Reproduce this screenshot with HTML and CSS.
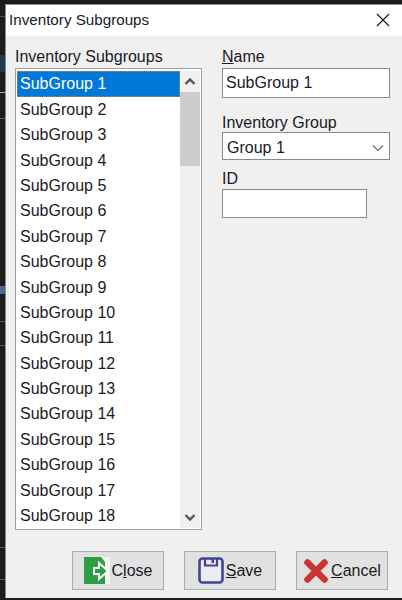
FILE: index.html
```html
<!DOCTYPE html>
<html lang="en">
<head>
    <meta charset="UTF-8">
    <title>Inventory Subgroups</title>
    <link rel="stylesheet" href="styles.css">
</head>
<body>
<div class="desktop_strip"></div>
<div class="window">
    <div class="titlebar">
        <span class="title_text">Inventory Subgroups</span>
        <svg class="close_x" width="14" height="14" viewBox="0 0 14 14"><path d="M1 1L13 13M13 1L1 13" stroke="#1a1a1a" stroke-width="1.2" fill="none"/></svg>
    </div>
    <div class="content">
        <div class="main_row">
            <div class="left_col">
                <div class="field_label list_label">Inventory Subgroups</div>
                <div class="listbox">
                    <ul class="list_items">
                        <li class="selected">SubGroup 1</li>
                        <li>SubGroup 2</li>
                        <li>SubGroup 3</li>
                        <li>SubGroup 4</li>
                        <li>SubGroup 5</li>
                        <li>SubGroup 6</li>
                        <li>SubGroup 7</li>
                        <li>SubGroup 8</li>
                        <li>SubGroup 9</li>
                        <li>SubGroup 10</li>
                        <li>SubGroup 11</li>
                        <li>SubGroup 12</li>
                        <li>SubGroup 13</li>
                        <li>SubGroup 14</li>
                        <li>SubGroup 15</li>
                        <li>SubGroup 16</li>
                        <li>SubGroup 17</li>
                        <li>SubGroup 18</li>
                    </ul>
                    <div class="scrollbar">
                        <svg class="scroll_arrow" width="20" height="21" viewBox="0 0 20 21"><path d="M5.500 13L10 8.500L14.500 13" stroke="#555" stroke-width="2.400" fill="none"/></svg>
                        <div class="scroll_track"><div class="scroll_thumb"></div></div>
                        <svg class="scroll_arrow" width="20" height="21" viewBox="0 0 20 21"><path d="M5.500 8L10 12.500L14.500 8" stroke="#555" stroke-width="2.400" fill="none"/></svg>
                    </div>
                </div>
            </div>
            <div class="right_col">
                <label class="field_label name_label"><u>N</u>ame</label>
                <div class="text_box">SubGroup 1</div>
                <label class="field_label group_label">Inventory Group</label>
                <div class="select_box">
                    <span>Group 1</span>
                    <svg width="12" height="8" viewBox="0 0 12 8"><path d="M1 1.500L6 6.500L11 1.500" stroke="#666" stroke-width="1.100" fill="none"/></svg>
                </div>
                <label class="field_label id_label">ID</label>
                <div class="text_box id_box"></div>
            </div>
        </div>
        <div class="button_row">
            <div class="btn">
                <svg width="26" height="27" viewBox="0 0 26 27">
                    <rect width="26" height="27" fill="#f3f6f3"/>
                    <path d="M0 0H17L21 5V27H0Z" fill="#2e9e45"/>
                    <path d="M10 11H15V6L24 14L15 22V17H10Z" fill="#2e9e45" stroke="#fff" stroke-width="2"/>
                </svg>
                <span>C<u>l</u>ose</span>
            </div>
            <div class="btn">
                <svg width="26" height="27" viewBox="0 0 26 27">
                    <rect x="1.500" y="1.500" width="23" height="24" rx="3" fill="#eceaf2" stroke="#3f4599" stroke-width="2.600"/>
                    <path d="M7 2V8.500H19V2" fill="none" stroke="#3f4599" stroke-width="2.200"/>
                    <rect x="13.500" y="2" width="2.500" height="4" fill="#3f4599"/>
                </svg>
                <span><u>S</u>ave</span>
            </div>
            <div class="btn">
                <svg width="26" height="26" viewBox="0 0 26 26"><path d="M4.500 4.500L21.500 21.500M21.500 4.500L4.500 21.500" stroke="#cc3333" stroke-width="6.500" stroke-linecap="round" fill="none"/></svg>
                <span><u>C</u>ancel</span>
            </div>
        </div>
    </div>
</div>
</body>
</html>
```
FILE: styles.css
```css
html,body{
    margin: 0;
    height: 100%;
    overflow: hidden;
}
body{
    background: #1c1c1c;
    font-family: "Liberation Sans", Arial, sans-serif;
    font-size: 16px;
    color: #1a1a24;
    display: flex;
}
/* the bit of the desktop showing left of the dialog, with its row lines */
.desktop_strip{
    width: 5px;
    flex: none;
    background: linear-gradient(to bottom,
        #1c1c1c 16px, #555 16px, #555 17px,
        #1c1c1c 17px, #1c1c1c 55px, #24384c 55px, #24384c 72px,
        #1c1c1c 72px, #1c1c1c 92px, #aaa 92px, #aaa 93px,
        #1c1c1c 93px, #1c1c1c 118px, #666 118px, #666 119px,
        #1c1c1c 119px, #1c1c1c 286px, #4a6a96 286px, #4a6a96 294px,
        #1c1c1c 294px, #1c1c1c 321px, #555 321px, #555 322px,
        #1c1c1c 322px, #1c1c1c 345px, #555 345px, #555 346px,
        #1c1c1c 346px, #1c1c1c 547px, #555 547px, #555 548px,
        #1c1c1c 548px, #1c1c1c 579px, #555 579px, #555 580px,
        #1c1c1c 580px);
}
.window{
    margin-top: 4px;
    height: 594px;
    flex: 1;
    background: #f0f0f0;
    border-top: 1px solid #8a8a8a;
    border-left: 1px solid #8a8a8a;
    box-sizing: border-box;
    display: flex;
    flex-direction: column;
}
.titlebar{
    height: 31px;
    background: #fff;
    display: flex;
    align-items: center;
    justify-content: space-between;
    padding: 0 13px 2px 3px;
    box-sizing: border-box;
    flex: none;
}
.title_text{
    font-size: 15.2px;
}
.content{
    padding: 10px 13px 0 9px;
    flex: 1;
}
.main_row{
    display: flex;
    gap: 20px;
}
.left_col{
    width: 187px;
}
.field_label{
    display: block;
    line-height: 22px;
}
.list_label{
    height: 22px;
}
.listbox{
    height: 462px;
    box-sizing: border-box;
    border: 1px solid #a0a0a0;
    background: #fff;
    display: flex;
    padding: 2px 1px 1px 1px;
}
.list_items{
    list-style: none;
    margin: 0;
    padding: 0.4px 0 0;
    flex: 1;
    overflow: hidden;
}
.list_items li{
    height: 25.4px;
    line-height: 25.4px;
    padding-left: 3px;
}
.list_items li.selected{
    background: #0078d7;
    color: #fff;
    outline: 1px dotted #c58a3a;
    outline-offset: -1px;
}
.scrollbar{
    width: 20px;
    display: flex;
    flex-direction: column;
    background: #f0f0f0;
    flex: none;
}
.scroll_arrow{
    display: block;
    flex: none;
}
.scroll_track{
    flex: 1;
}
.scroll_thumb{
    height: 74px;
    background: #cdcdcd;
}
.right_col{
    width: 168px;
}
.text_box{
    box-sizing: border-box;
    height: 30px;
    border: 1px solid #8a8a8a;
    background: #fff;
    line-height: 27px;
    padding-left: 3px;
}
.group_label{
    margin-top: 14px;
    height: 21px;
}
.select_box{
    box-sizing: border-box;
    height: 28px;
    margin-top: -1px;
    border: 1px solid #8a8a8a;
    background: #fff;
    display: flex;
    align-items: center;
    justify-content: space-between;
    padding: 3px 5px 0 4px;
}
.id_label{
    margin-top: 8px;
    height: 21px;
}
.id_box{
    width: 145px;
    height: 29px;
}
.button_row{
    display: flex;
    justify-content: flex-end;
    gap: 20px;
    margin: 21px 2px 0 0;
}
.btn{
    box-sizing: border-box;
    width: 92px;
    height: 39px;
    background: #e1e1e1;
    border: 1px solid #adadad;
    display: flex;
    align-items: center;
    justify-content: center;
    gap: 2px;
}
```
